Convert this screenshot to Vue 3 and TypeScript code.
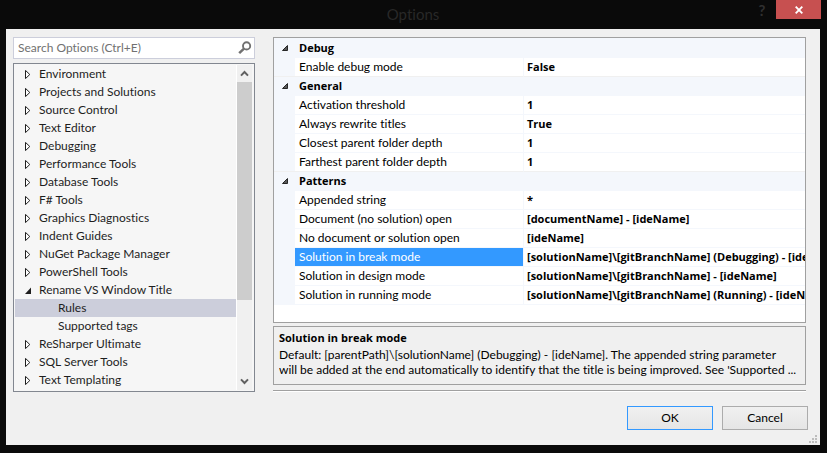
<script setup lang="ts">
import { ref } from 'vue'

interface TreeItem {
  label: string
  level: number
  open?: boolean
}

interface Setting {
  name: string
  value: string
}

interface Category {
  title: string
  settings: Setting[]
}

const treeItems: TreeItem[] = [
  { label: 'Environment', level: 0 },
  { label: 'Projects and Solutions', level: 0 },
  { label: 'Source Control', level: 0 },
  { label: 'Text Editor', level: 0 },
  { label: 'Debugging', level: 0 },
  { label: 'Performance Tools', level: 0 },
  { label: 'Database Tools', level: 0 },
  { label: 'F# Tools', level: 0 },
  { label: 'Graphics Diagnostics', level: 0 },
  { label: 'Indent Guides', level: 0 },
  { label: 'NuGet Package Manager', level: 0 },
  { label: 'PowerShell Tools', level: 0 },
  { label: 'Rename VS Window Title', level: 0, open: true },
  { label: 'Rules', level: 1 },
  { label: 'Supported tags', level: 1 },
  { label: 'ReSharper Ultimate', level: 0 },
  { label: 'SQL Server Tools', level: 0 },
  { label: 'Text Templating', level: 0 },
]

const categories: Category[] = [
  { title: 'Debug', settings: [{ name: 'Enable debug mode', value: 'False' }] },
  {
    title: 'General',
    settings: [
      { name: 'Activation threshold', value: '1' },
      { name: 'Always rewrite titles', value: 'True' },
      { name: 'Closest parent folder depth', value: '1' },
      { name: 'Farthest parent folder depth', value: '1' },
    ],
  },
  {
    title: 'Patterns',
    settings: [
      { name: 'Appended string', value: '*' },
      { name: 'Document (no solution) open', value: '[documentName] - [ideName]' },
      { name: 'No document or solution open', value: '[ideName]' },
      { name: 'Solution in break mode', value: '[solutionName]\\[gitBranchName] (Debugging) - [ideName]' },
      { name: 'Solution in design mode', value: '[solutionName]\\[gitBranchName] - [ideName]' },
      { name: 'Solution in running mode', value: '[solutionName]\\[gitBranchName] (Running) - [ideName]' },
    ],
  },
]

const helpLines: string[] = [
  'Default: [parentPath]\\[solutionName] (Debugging) - [ideName]. The appended string parameter',
  "will be added at the end automatically to identify that the title is being improved. See 'Supported ...",
]

const query = ref('')
const selectedPage = ref('Rules')
const selectedSetting = ref('Solution in break mode')
</script>

<template>
  <div class="window">
    <header class="titlebar">
      <h1 class="title">Options</h1>
      <div class="window-buttons">
        <button class="help" type="button" aria-label="Help">?</button>
        <button class="close" type="button" aria-label="Close">
          <svg width="8" height="8" viewBox="0 0 8 8" aria-hidden="true">
            <path d="M0.7 0.7L7.3 7.3M7.3 0.7L0.7 7.3" stroke="#fff" stroke-width="1.9" />
          </svg>
        </button>
      </div>
    </header>

    <main class="dialog">
      <div class="panes">
        <nav class="sidebar" aria-label="Option pages">
          <div class="search">
            <input v-model="query" type="text" placeholder="Search Options (Ctrl+E)" aria-label="Search Options" />
            <svg width="14" height="14" viewBox="0 0 14 14" aria-hidden="true">
              <circle cx="8.6" cy="4.9" r="3.6" fill="none" stroke="#717171" stroke-width="1.9" />
              <path d="M6 7.6L1.2 12.2" stroke="#717171" stroke-width="2.5" />
            </svg>
          </div>

          <div class="tree">
            <ul class="tree-list">
              <li v-for="item in treeItems" :key="item.label">
                <button
                  type="button"
                  class="tree-row"
                  :class="{ child: item.level === 1, selected: item.label === selectedPage }"
                  @click="selectedPage = item.label"
                >
                  <svg v-if="item.level === 0" class="arrow" width="7" height="9" viewBox="0 0 7 9" aria-hidden="true">
                    <path v-if="item.open" d="M6 1.5V8H0z" fill="#1e1e1e" />
                    <path v-else d="M0.5 0.4L4.8 4.5L0.5 8.6z" fill="#fff" stroke="#1e1e1e" />
                  </svg>
                  <span>{{ item.label }}</span>
                </button>
              </li>
            </ul>
            <div class="scrollbar">
              <button type="button" aria-label="Scroll up">
                <svg width="9" height="7" viewBox="0 0 9 7" aria-hidden="true">
                  <path d="M1 5.6L4.5 2L8 5.6" fill="none" stroke="#606060" stroke-width="2" />
                </svg>
              </button>
              <div class="track"><div class="thumb"></div></div>
              <button type="button" aria-label="Scroll down">
                <svg width="9" height="7" viewBox="0 0 9 7" aria-hidden="true">
                  <path d="M1 1.4L4.5 5L8 1.4" fill="none" stroke="#606060" stroke-width="2" />
                </svg>
              </button>
            </div>
          </div>
        </nav>

        <section class="page">
          <div class="grid-box">
            <table class="grid">
              <colgroup>
                <col class="col-margin" />
                <col class="col-name" />
                <col />
              </colgroup>
              <tbody v-for="category in categories" :key="category.title">
                <tr class="category">
                  <td>
                    <svg width="6" height="6" viewBox="0 0 6 6" aria-hidden="true">
                      <path d="M5.5 0.5V5.5H0.5z" fill="#595959" stroke="#262626" />
                    </svg>
                  </td>
                  <th colspan="2" scope="rowgroup">{{ category.title }}</th>
                </tr>
                <tr
                  v-for="setting in category.settings"
                  :key="setting.name"
                  :class="{ active: setting.name === selectedSetting }"
                  @click="selectedSetting = setting.name"
                >
                  <td class="margin"></td>
                  <th class="name" scope="row">{{ setting.name }}</th>
                  <td class="value">{{ setting.value }}</td>
                </tr>
              </tbody>
            </table>
          </div>

          <div class="help-box">
            <h2>Solution in break mode</h2>
            <p><span v-for="line in helpLines" :key="line">{{ line }}</span></p>
          </div>
          <hr />
        </section>
      </div>

      <footer class="actions">
        <button type="button" class="ok">OK</button>
        <button type="button">Cancel</button>
      </footer>

      <svg class="grip" width="8" height="8" viewBox="0 0 8 8" aria-hidden="true">
        <path d="M6 0h2v2h-2zM3 3h2v2h-2zM6 3h2v2h-2zM0 6h2v2h-2zM3 6h2v2h-2zM6 6h2v2h-2z" fill="#bdbdbd" />
      </svg>
    </main>
  </div>
</template>

<style>
body {
  background: #fff;
}
</style>

<style scoped>
* {
  box-sizing: border-box;
}

.window {
  display: flex;
  flex-direction: column;
  min-height: calc(100vh - 1px);
  padding: 0 7px 8px 6px;
  background: #0a0a0a;
  color: #000;
  font-family: Lato, 'Open Sans', sans-serif;
  font-size: 12px;
  font-variant-ligatures: none;
  line-height: 18px;
}

button,
input {
  margin: 0;
  padding: 0;
  border: 0;
  background: none;
  color: inherit;
  font: inherit;
}

svg {
  display: block;
  flex: none;
}

.titlebar {
  position: relative;
  display: flex;
  justify-content: center;
  height: 29px;
}

.title {
  margin: 0;
  color: #282828;
  font-size: 15px;
  font-weight: 400;
  line-height: 28px;
}

.window-buttons {
  position: absolute;
  top: 0;
  right: -1px;
  display: flex;
  align-items: flex-start;
}

.help {
  width: 28px;
  height: 19px;
  color: #303030;
  font-size: 15px;
  font-weight: 700;
}

.close {
  display: flex;
  align-items: center;
  justify-content: center;
  width: 45px;
  height: 19px;
  background: #c75050;
}

.dialog {
  position: relative;
  display: flex;
  flex: 1;
  flex-direction: column;
  padding: 8px 12px 15px 7px;
  background: #f0f0f0;
}

.panes {
  display: grid;
  flex: 1;
  grid-template-columns: 242px minmax(0, 1fr);
  gap: 18px;
  padding-right: 2px;
}

.sidebar {
  display: flex;
  flex-direction: column;
  gap: 4px;
}

.search {
  display: flex;
  align-items: center;
  height: 22px;
  padding: 0 2px 0 4px;
  border: 1px solid #cccedb;
  background: #fff;
}

.search input {
  flex: 1;
  min-width: 0;
  outline: 0;
}

.search input::placeholder {
  color: #717171;
  opacity: 1;
}

.tree {
  display: flex;
  flex: 1;
  padding: 1px 2px 1px 1px;
  border: 1px solid #828790;
  background: #f6f6f6;
}

.tree-list {
  flex: 1;
  margin: 0;
  padding: 0;
  list-style: none;
}

.tree-row {
  display: flex;
  align-items: center;
  gap: 7px;
  width: 100%;
  height: 18px;
  padding-left: 10px;
  color: #1e1e1e;
  text-align: left;
}

.tree-row.child {
  padding-left: 43px;
}

.tree-row.selected {
  background: #cccedb;
}

.scrollbar {
  display: flex;
  flex-direction: column;
  width: 16px;
  border-left: 1px solid #fff;
  background: #f0f0f0;
}

.scrollbar button {
  display: flex;
  align-items: center;
  justify-content: center;
  height: 17px;
}

.track {
  flex: 1;
}

.thumb {
  height: 75%;
  background: #cdcdcd;
}

.page {
  display: flex;
  flex-direction: column;
  min-width: 0;
}

.grid-box {
  flex: 1;
  padding-top: 1px;
  border: 1px solid #a0a0a0;
  background: linear-gradient(#f4f7fc 1px, #fff 1px);
}

.grid {
  width: 100%;
  border-collapse: separate;
  border-spacing: 0;
  table-layout: fixed;
}

.col-margin {
  width: 21px;
}

.col-name {
  width: 229px;
}

.grid td,
.grid th {
  height: 19px;
  padding: 0 0 0 4px;
  border-bottom: 1px solid #f4f7fc;
  overflow: hidden;
  text-align: left;
  white-space: nowrap;
}

.category td,
.category th,
.grid .margin {
  background: #f4f7fc;
}

.category td svg {
  margin-left: 4px;
}

.category th,
.grid .value,
.help-box h2 {
  font-family: 'Open Sans', sans-serif;
  font-size: 11px;
  font-weight: 700;
}

.grid tbody:not(:last-child) tr:last-child td,
.grid tbody:not(:last-child) tr:last-child th {
  border-bottom-color: #f0f0f0;
}

.grid .name {
  border-right: 1px solid #f4f7fc;
  font-weight: 400;
}

.grid .value {
  padding-left: 3px;
}

.active .name {
  background: #3399ff;
  background-clip: padding-box;
  color: #fff;
}

.help-box {
  margin-top: 3px;
  padding: 2px 5px 7px;
  border: 1px solid #a0a0a0;
}

.help-box h2 {
  margin: 0;
  line-height: 18px;
}

.help-box p {
  margin: 0;
  line-height: 15px;
}

.help-box p span {
  display: block;
  overflow: hidden;
  white-space: nowrap;
}

hr {
  width: 100%;
  height: 2px;
  margin: 5px 0 0;
  border: 0;
  border-top: 1px solid #a0a0a0;
  border-bottom: 1px solid #fff;
}

.actions {
  display: flex;
  justify-content: flex-end;
  gap: 9px;
  padding-top: 14px;
}

.actions button {
  width: 86px;
  height: 24px;
  border: 1px solid #acacac;
  background: linear-gradient(#f0f0f0, #e5e5e5);
}

.actions .ok {
  border-color: #3399ff;
}

.grip {
  position: absolute;
  right: 3px;
  bottom: 2px;
}
</style>
